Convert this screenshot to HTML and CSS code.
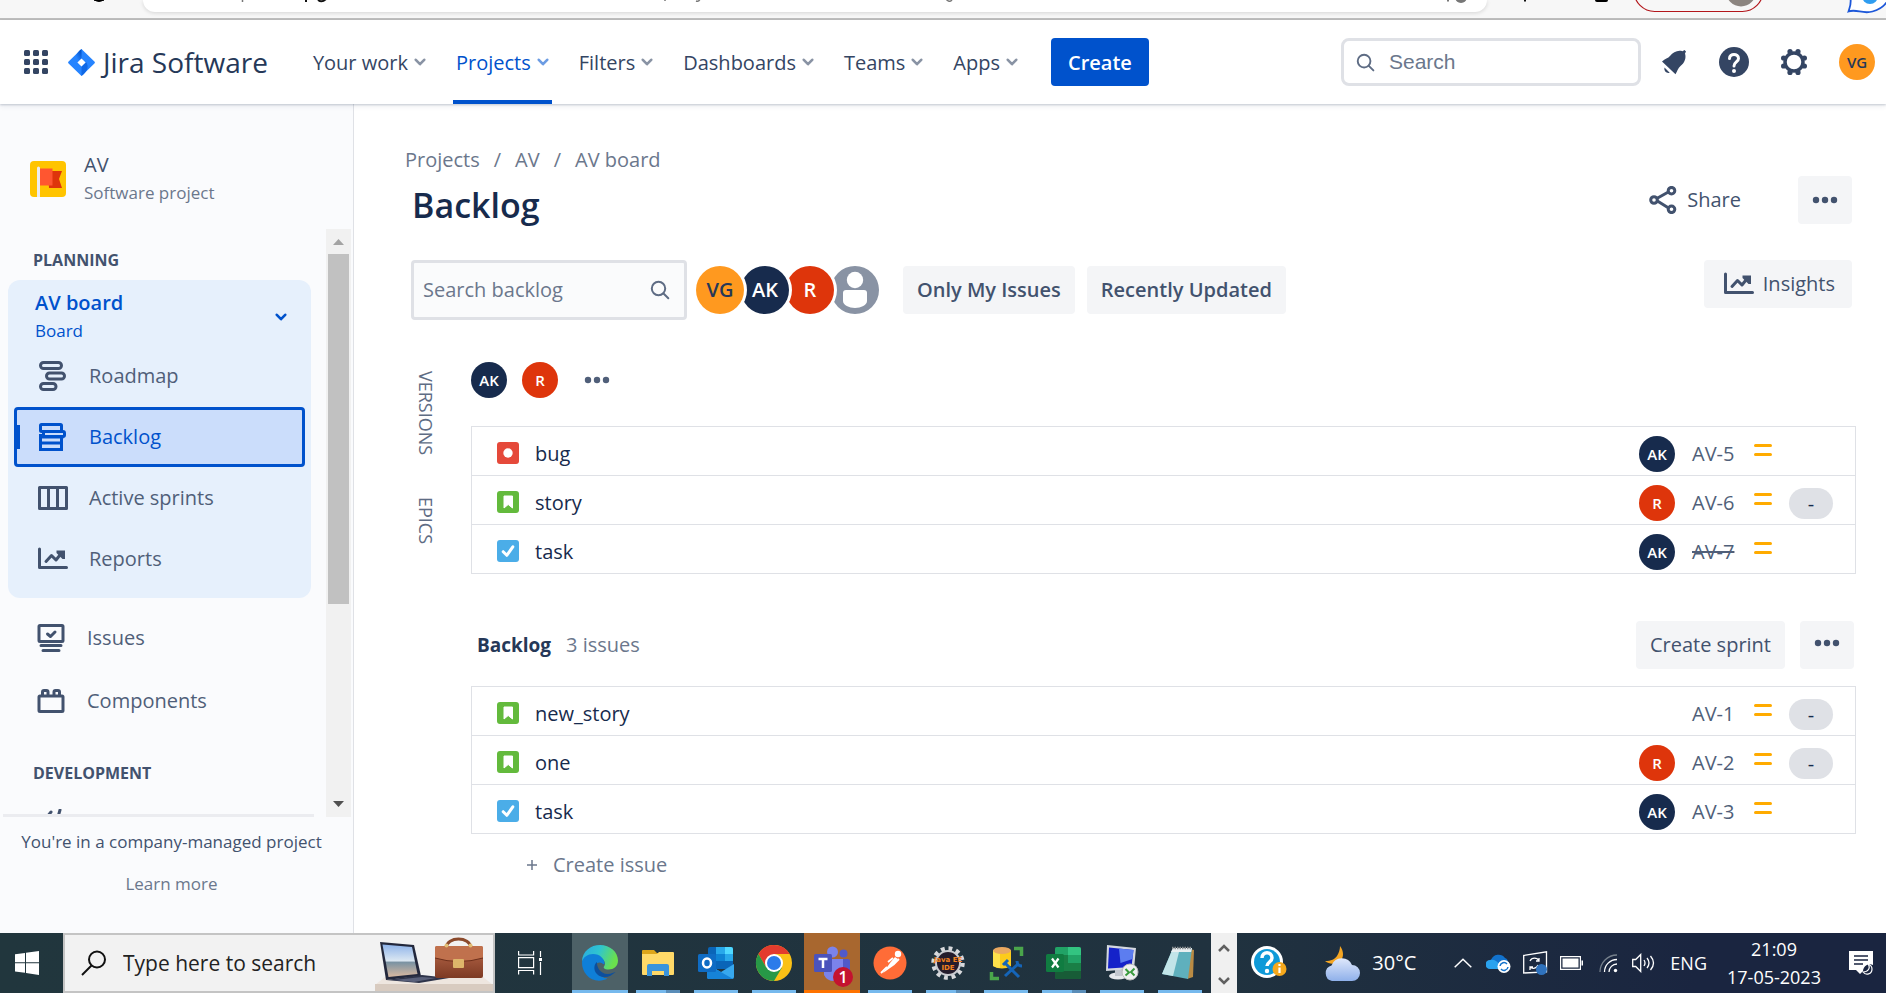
FILE: index.html
```html
<!DOCTYPE html>
<html lang="en">
<head>
<meta charset="utf-8">
<title>AV board - Backlog - Jira Software</title>
<link rel="stylesheet" href="styles.css">
</head>
<body>
<svg class="defs" aria-hidden="true">
  <symbol id="chev" viewBox="0 0 12 8"><path d="M1.8 1.8 6 6.2l4.200-4.400" fill="none" stroke="currentColor" stroke-width="2.600" stroke-linecap="round" stroke-linejoin="round"/></symbol>
  <symbol id="lens" viewBox="0 0 20 20"><circle cx="8.500" cy="8.500" r="6.700" fill="none" stroke="currentColor" stroke-width="2"/><path d="m13.500 13.500 4.800 4.800" stroke="currentColor" stroke-width="2" stroke-linecap="round"/></symbol>
  <symbol id="dots" viewBox="0 0 26 8"><g fill="currentColor"><circle cx="4" cy="4" r="3.200"/><circle cx="13" cy="4" r="3.200"/><circle cx="22" cy="4" r="3.200"/></g></symbol>
  <symbol id="chart" viewBox="0 0 30 24"><g fill="none" stroke="currentColor" stroke-width="3" stroke-linecap="round" stroke-linejoin="round"><path d="M1.500 2v18.500h27"/><path d="m8 14.500 5.500-6 4.500 4.500 6-7.500" /></g><path d="M18.500 3.500h8.500v8.500h-2.500L18.500 6z" fill="currentColor"/></symbol>
  <symbol id="bug" viewBox="0 0 22 22"><rect width="22" height="22" rx="3" fill="#e5493a"/><circle cx="11" cy="11" r="4.700" fill="#fff"/></symbol>
  <symbol id="story" viewBox="0 0 22 22"><rect width="22" height="22" rx="3" fill="#63ba3c"/><path d="M7 5h8.500v12L11.200 13.500 7 17z" fill="#fff" stroke="#fff" stroke-linejoin="round"/></symbol>
  <symbol id="task" viewBox="0 0 22 22"><rect width="22" height="22" rx="3" fill="#4bade8"/><path d="m6.200 11.700 3.600 3.600 6-8.500" fill="none" stroke="#fff" stroke-width="3" stroke-linecap="round" stroke-linejoin="round"/></symbol>
  <symbol id="medium" viewBox="0 0 18 12"><path d="M1.500 1.500h15M1.500 10.500h15" stroke="#ffab00" stroke-width="3" stroke-linecap="round"/></symbol>
</svg>

<div class="browser">
  <svg class="browser-left" width="143" height="18" viewBox="0 0 143 18" aria-hidden="true"><path d="M94 0q5 3 10 0z" fill="#000" stroke="#000"/></svg>
  <div class="address">
    <svg width="820" height="12" viewBox="0 0 820 12" aria-hidden="true"><path d="M99.500 0v2M803-1q3 4 6 1M522 0v1M553 1q3 1 4-2" fill="none" stroke="#777" stroke-width="1.500"/><path d="M163 0v2M175 0q4 3 8-1" fill="none" stroke="#111" stroke-width="2"/></svg>
    <svg class="address-end" width="40" height="12" viewBox="0 0 40 12" aria-hidden="true"><path d="M1 0v1.500" stroke="#777" stroke-width="2"/><circle cx="14" cy="-3" r="6" fill="#777"/></svg>
  </div>
  <svg width="399" height="18" viewBox="0 0 399 18" aria-hidden="true"><path d="M38 0v1.500" stroke="#111" stroke-width="2"/><path d="M108-1h13v1a2 2 0 0 1-2 2h-9a2 2 0 0 1-2-2z" fill="#000"/><rect x="147" y="-30" width="129" height="41.500" rx="20.700" fill="#f7f7f7" stroke="#b3161b" stroke-width="1.200"/><circle cx="254" cy="-8.500" r="15" fill="#8c8580"/><path d="M363-4c2 7 0 10-1.500 15.500 8-3 14 3 24 0 6-1.500 12-5 16-12" fill="#fff" stroke="#1c57d9" stroke-width="1.800"/><circle cx="383" cy="-4" r="8" fill="#2f9df0"/></svg>
</div>

<header class="topnav">
  <button class="plain" aria-label="Switch to">
    <svg width="24" height="24" viewBox="0 0 24 24" fill="#344563"><rect width="6" height="6" rx="1.500"/><rect x="9" width="6" height="6" rx="1.500"/><rect x="18" width="6" height="6" rx="1.500"/><rect y="9" width="6" height="6" rx="1.500"/><rect x="9" y="9" width="6" height="6" rx="1.500"/><rect x="18" y="9" width="6" height="6" rx="1.500"/><rect y="18" width="6" height="6" rx="1.500"/><rect x="9" y="18" width="6" height="6" rx="1.500"/><rect x="18" y="18" width="6" height="6" rx="1.500"/></svg>
  </button>
  <a class="logo" href="#">
    <svg width="27" height="27" viewBox="0 0 27 27" aria-hidden="true"><defs><linearGradient id="ja" x1="1" y1="0" x2=".4" y2=".8"><stop offset=".2" stop-color="#0052cc"/><stop offset="1" stop-color="#2684ff"/></linearGradient></defs><path d="M13.500 0 26.400 12.600a1.200 1.200 0 0 1 0 1.800L13.500 27 .6 14.400a1.200 1.200 0 0 1 0-1.800z" fill="#2684ff"/><path d="M13.500 0v9.500L9 14C6 10 7 5 13.500 0z" fill="url(#ja)"/><path d="M13.500 27v-9.500L18 13c3 4 2 9-4.500 14z" fill="#1068e6"/><path d="m13.500 9.500 4.100 4-4.100 4-4.100-4z" fill="#fff"/></svg>
    <span>Jira Software</span>
  </a>
  <nav class="menu">
    <button>Your work <svg><use href="#chev"/></svg></button>
    <button class="current">Projects <svg><use href="#chev"/></svg></button>
    <button>Filters <svg><use href="#chev"/></svg></button>
    <button>Dashboards <svg><use href="#chev"/></svg></button>
    <button>Teams <svg><use href="#chev"/></svg></button>
    <button>Apps <svg><use href="#chev"/></svg></button>
  </nav>
  <button class="create">Create</button>
  <div class="top-right">
    <label class="site-search"><svg width="19" height="19"><use href="#lens"/></svg><input type="text" placeholder="Search" aria-label="Search"></label>
    <button class="plain" aria-label="Notifications"><svg width="30" height="30" viewBox="0 0 30 30" fill="#344563"><path d="M3 14.500c3-2.700 6-3 8.200-5.700C14 5 19 2.600 23.500 4.200l2-1.200 1.500 1.500-1 2c1.500 4.500-.5 9.500-4.500 12.500-2.500 2-3.200 5-5 8.300z"/><path d="m5.500 20.500 5.200 5.200c-3 1-6-1.500-5.200-5.200z"/></svg></button>
    <button class="plain" aria-label="Help"><svg width="30" height="30" viewBox="0 0 30 30"><circle cx="15" cy="15" r="15" fill="#344563"/><path d="M10.500 11.500c0-5.500 9-5.500 9 0 0 3.500-4.500 3.500-4.500 7.500" fill="none" stroke="#fff" stroke-width="3" stroke-linecap="round"/><circle cx="15" cy="24" r="2" fill="#fff"/></svg></button>
    <button class="plain" aria-label="Settings"><svg width="30" height="30" viewBox="0 0 30 30"><circle cx="15" cy="15" r="9" fill="none" stroke="#344563" stroke-width="3.500"/><g fill="#344563"><circle cx="11" cy="4.600" r="2.600"/><circle cx="19" cy="4.600" r="2.600"/><circle cx="11" cy="25.400" r="2.600"/><circle cx="19" cy="25.400" r="2.600"/><circle cx="4.600" cy="11" r="2.600"/><circle cx="4.600" cy="19" r="2.600"/><circle cx="25.400" cy="11" r="2.600"/><circle cx="25.400" cy="19" r="2.600"/></g></svg></button>
    <button class="avatar vg" aria-label="Profile">VG</button>
  </div>
</header>

<div class="workspace">
  <aside class="sidebar">
    <div class="project">
      <svg width="36" height="36" viewBox="0 0 36 36" aria-hidden="true"><rect width="36" height="36" rx="4" fill="#ffc400"/><path d="M18 10h14l-3 8 3 9H19z" fill="#de350b"/><path d="M10 7.500h12.500v17H10z" fill="#ff5630"/><path d="M7 7q0-1.500 1.500-1.500T10 7v29H7z" fill="#ebecf0"/></svg>
      <div><strong>AV</strong><span>Software project</span></div>
    </div>
    <div class="scroller">
      <div class="scroll-view">
        <div class="scroll-body">
          <h2>Planning</h2>
          <section class="board">
            <button class="board-head"><span><strong>AV board</strong><small>Board</small></span><svg width="12" height="8"><use href="#chev"/></svg></button>
            <a href="#"><svg width="30" height="30" viewBox="0 0 30 30"><g fill="none" stroke="currentColor" stroke-width="3"><rect x="2.500" y="1.500" width="21" height="6" rx="3"/><rect x="8.500" y="12" width="18" height="6" rx="3"/><rect x="2.500" y="22.500" width="15.500" height="6" rx="3"/></g></svg>Roadmap</a>
            <a href="#" class="selected"><svg width="30" height="30" viewBox="0 0 30 30"><g fill="none" stroke="currentColor" stroke-width="3"><rect x="2.500" y="2.500" width="21" height="7" rx="1"/><rect x="5.500" y="9.500" width="21" height="5" rx="1.500"/><path d="M2.500 12v15.500h21V15M2.500 15h23M2.500 21h21"/></g></svg>Backlog</a>
            <a href="#"><svg width="30" height="30" viewBox="0 0 30 30"><path d="M1.500 4.500h27v21h-27zM10.500 4.500v21M19.500 4.500v21" fill="none" stroke="currentColor" stroke-width="3" stroke-linejoin="round"/></svg>Active sprints</a>
            <a href="#"><svg width="30" height="24"><use href="#chart"/></svg>Reports</a>
          </section>
          <div class="side-links">
            <a href="#"><svg width="28" height="30" viewBox="0 0 28 30"><g fill="none" stroke="currentColor" stroke-width="3" stroke-linecap="round" stroke-linejoin="round"><rect x="2" y="2.500" width="24" height="16" rx="1"/><path d="m10.500 11 3 2.500 4.500-4.500M4 22.500h20M6 27.500h16"/></g></svg>Issues</a>
            <a href="#"><svg width="28" height="26" viewBox="0 0 28 26"><g fill="none" stroke="currentColor" stroke-width="3" stroke-linejoin="round"><rect x="2" y="8" width="24" height="15.500" rx="1"/><path d="M5.500 8V4q0-1.500 1.500-1.500h2.500Q11 2.500 11 4v4M17 8V4q0-1.500 1.500-1.500H21q1.500 0 1.500 1.500v4"/></g></svg>Components</a>
          </div>
          <h2>Development</h2>
          <svg class="code" width="28" height="28" viewBox="0 0 28 28" aria-hidden="true"><path d="m11 3-4 5 4 5M20 1l-4 14" stroke="#42526e" stroke-width="3" fill="none" stroke-linecap="round"/></svg>
        </div>
        <div class="divider"></div>
      </div>
      <div class="scrollbar" aria-hidden="true">
        <svg width="12" height="6" viewBox="0 0 12 6"><path d="M0 6h11L5.500 0z" fill="#a3a3a3"/></svg>
        <div class="track"><div class="thumb"></div></div>
        <svg width="12" height="6" viewBox="0 0 12 6"><path d="M0 0h11L5.500 6z" fill="#505050"/></svg>
      </div>
    </div>
    <footer class="side-foot"><p>You're in a company-managed project</p><a href="#">Learn more</a></footer>
  </aside>

  <main>
    <div class="page-head">
      <div>
        <nav class="crumbs"><a href="#">Projects</a><span>/</span><a href="#">AV</a><span>/</span><a href="#">AV board</a></nav>
        <h1>Backlog</h1>
      </div>
      <div class="actions">
        <button class="share"><svg width="28" height="28" viewBox="0 0 28 28" fill="none" stroke="currentColor" stroke-width="3"><path d="M6 13.500 22 4.500M6 13.500l16 10"/><circle cx="5" cy="14" r="3.300" fill="#fff"/><circle cx="22.500" cy="4.700" r="3.300" fill="#fff"/><circle cx="22.500" cy="23.300" r="3.300" fill="#fff"/></svg>Share</button>
        <button class="grey" aria-label="More"><svg width="26" height="8"><use href="#dots"/></svg></button>
      </div>
    </div>

    <div class="toolbar">
      <label class="backlog-search"><input type="text" placeholder="Search backlog" aria-label="Search backlog"><svg width="20" height="20"><use href="#lens"/></svg></label>
      <div class="people">
        <button class="avatar big vg">VG</button><button class="avatar big ak">AK</button><button class="avatar big r">R</button><button class="avatar big none" aria-label="Unassigned"><svg width="48" height="48" viewBox="0 0 48 48" fill="#fff"><circle cx="24" cy="14" r="8.200"/><path d="M12 27a3 3 0 0 1 3-3h18a3 3 0 0 1 3 3v8c0 4-6 7-12 7s-12-3-12-7z"/></svg></button>
      </div>
      <button class="grey">Only My Issues</button>
      <button class="grey">Recently Updated</button>
      <button class="grey insights"><svg width="30" height="24"><use href="#chart"/></svg>Insights</button>
    </div>

    <div class="planner">
      <div class="rail"><button>VERSIONS</button><button>EPICS</button></div>
      <div class="lists">
        <div class="sprint-head"><span class="avatar ak">AK</span><span class="avatar r">R</span><button class="plain dots" aria-label="Sprint workload"><svg width="26" height="8"><use href="#dots"/></svg></button></div>
        <ul class="issues">
          <li><svg class="type"><use href="#bug"/></svg><a class="title" href="#">bug</a><span class="avatar ak">AK</span><a class="key" href="#">AV-5</a><svg class="prio"><use href="#medium"/></svg><span></span></li>
          <li><svg class="type"><use href="#story"/></svg><a class="title" href="#">story</a><span class="avatar r">R</span><a class="key" href="#">AV-6</a><svg class="prio"><use href="#medium"/></svg><span class="points">-</span></li>
          <li><svg class="type"><use href="#task"/></svg><a class="title" href="#">task</a><span class="avatar ak">AK</span><a class="key done" href="#">AV-7</a><svg class="prio"><use href="#medium"/></svg><span></span></li>
        </ul>
        <div class="backlog-head"><h2>Backlog</h2><span>3 issues</span><button class="grey light">Create sprint</button><button class="grey" aria-label="Backlog actions"><svg width="26" height="8"><use href="#dots"/></svg></button></div>
        <ul class="issues">
          <li><svg class="type"><use href="#story"/></svg><a class="title" href="#">new_story</a><span></span><a class="key" href="#">AV-1</a><svg class="prio"><use href="#medium"/></svg><span class="points">-</span></li>
          <li><svg class="type"><use href="#story"/></svg><a class="title" href="#">one</a><span class="avatar r">R</span><a class="key" href="#">AV-2</a><svg class="prio"><use href="#medium"/></svg><span class="points">-</span></li>
          <li><svg class="type"><use href="#task"/></svg><a class="title" href="#">task</a><span class="avatar ak">AK</span><a class="key" href="#">AV-3</a><svg class="prio"><use href="#medium"/></svg><span></span></li>
        </ul>
        <button class="create-issue"><svg width="10" height="10" viewBox="0 0 10 10"><path d="M5 0v10M0 5h10" stroke="currentColor" stroke-width="1.500"/></svg>Create issue</button>
      </div>
    </div>
  </main>
</div>

<footer class="taskbar">
  <button class="start" aria-label="Start"><svg width="24" height="24" viewBox="0 0 24 24" fill="#fff"><path d="M0 3.300 10 2v9.300H0zM11 1.800 24 0v11.300H11zM0 12.300h10v9.500L0 20.500zM11 12.300h13V24L11 22z"/></svg></button>
  <label class="win-search"><svg class="mag" width="26" height="26" viewBox="0 0 26 26" fill="none" stroke="#111" stroke-width="2"><circle cx="16" cy="9.500" r="8"/><path d="M10.500 15.500 1 25"/></svg><input type="text" placeholder="Type here to search" aria-label="Type here to search">
    <svg class="art" width="118" height="56" viewBox="0 0 118 56" aria-hidden="true"><defs><linearGradient id="sc" x1="0" y1="0" x2="0" y2="1"><stop offset="0" stop-color="#8fb4ea"/><stop offset=".5" stop-color="#dbe7f2"/><stop offset=".55" stop-color="#7b93a3"/><stop offset="1" stop-color="#d9b9a0"/></linearGradient><linearGradient id="bg" x1="0" y1="0" x2="0" y2="1"><stop offset="0" stop-color="#b9694a"/><stop offset="1" stop-color="#7d3a24"/></linearGradient></defs><path d="M10 42h98l10 8H0z" fill="#eee6df"/><path d="M0 49h118v7H0z" fill="#d8cbc0"/><path d="m5 7 34 3 7 31-35 4z" fill="#23283c"/><path d="m7.500 9.500 29.500 2.500 5.500 27-29 3z" fill="url(#sc)"/><path d="m11 45 36-5 27 3-30 5z" fill="#2d3349"/><path d="m19 45 28-3 14 1-22 4z" fill="#59607a"/><path d="M71 13C72 1 95 1 96 13" fill="none" stroke="#8b4a2c" stroke-width="3"/><rect x="60" y="11" width="48" height="32" rx="2" fill="url(#bg)"/><path d="M60 13q0-2 2-2h44q2 0 2 2v10q-24 7-48 0z" fill="#c0714d"/><path d="M60 23q24 7 48 0" fill="none" stroke="#6d2f1b"/><rect x="78" y="24" width="11" height="9" rx="1" fill="#deb56a"/><circle cx="71.500" cy="10.500" r="2" fill="#e2bd75"/><circle cx="95.500" cy="10.500" r="2" fill="#e2bd75"/></svg></label>
  <button class="taskview" aria-label="Task View"><svg width="24" height="24" viewBox="0 0 24 24" fill="none" stroke="#fff" stroke-width="1.200"><path d="M.6 0v4h15V0M.6 6.600h15v10H.6zM.6 23.500v-4h15v4M22.500 0v6M22.500 11v13"/><rect x="21" y="7" width="3" height="3" fill="#fff" stroke="none"/></svg></button>
  <div class="apps">
    <button class="active" aria-label="Microsoft Edge"><svg viewBox="0 0 36 36"><defs><linearGradient id="e1" x1="0" y1="0" x2="1" y2=".3"><stop offset="0" stop-color="#2aa9e0"/><stop offset=".5" stop-color="#2fc5d0"/><stop offset="1" stop-color="#6ae04d"/></linearGradient></defs><path d="M0 17C0 6 9 0 18 0c10 0 18 7 18 15.500 0 6-4.500 9-9.500 9-4 0-5.500-1.500-4.500-3 3-4-1-9-7-9C7 12.500 1 13 0 17z" fill="url(#e1)"/><path d="M0 17c1-5 6-8 11-8 7 0 12 5 11.500 10-1 1-4-3-7-1-4 3-2 10 3 13 4 2.500 8 3 8 2-14 8-27-3-26.500-16z" fill="#0f7fd8"/><path d="M15 17c-5 4-3 15 8 15 4 0 7-2 10.500-5-1 0-4 2-8 2-7 0-11-7-10.500-12z" fill="#0c4f9e"/></svg></button>
    <button aria-label="File Explorer" class="multi"><svg viewBox="0 0 36 36"><path d="M2 6q0-1 1-1h11l3 3h16q1 0 1 1v20H2z" fill="#dda51a"/><path d="M2 9h15l2-2h14q1 0 1 1v21q0 1-1 1H3q-1 0-1-1z" fill="#ffd968"/><path d="M7 31V21q0-2 2-2h18q2 0 2 2v10h-5v-5H12v5z" fill="#3a94dc"/></svg></button>
    <button aria-label="Outlook"><svg viewBox="0 0 36 36"><rect x="10" y="2" width="25" height="22" rx="2" fill="#0a65b8"/><path d="M18 2h9v7h-9zM27 9h8v7h-8z" fill="#28a8ea"/><path d="M27 2h6q2 0 2 2v5h-8z" fill="#50d9ff"/><path d="M18 9h9v7h-9z" fill="#0f83d4"/><path d="M9 19l14 8 13-8v13q0 2-2 2H11q-2 0-2-2z" fill="#37a8ee"/><path d="m9 19 26 15H11q-2 0-2-2z" fill="#1683d8"/><rect x="0" y="9" width="18" height="18" rx="1.500" fill="#0f6cc4"/><ellipse cx="9" cy="18" rx="4" ry="4.500" fill="none" stroke="#fff" stroke-width="2.500"/></svg></button>
    <button aria-label="Google Chrome"><svg viewBox="0 0 36 36"><circle cx="18" cy="18" r="18" fill="#fbc116"/><path d="M2.400 9A18 18 0 0 1 33.600 9H18l-8 13z" fill="#e33b2e"/><path d="M2.400 9A18 18 0 0 0 18 36l8-13.500-8 3.500-8-4z" fill="#279847"/><circle cx="18" cy="18" r="9" fill="#fff"/><circle cx="18" cy="18" r="7" fill="#2b7bea"/></svg></button>
    <button class="alert" aria-label="Microsoft Teams, 1 notification"><svg viewBox="0 0 40 40"><circle cx="20.500" cy="9" r="5.500" fill="#7b83eb"/><circle cx="31.500" cy="10.500" r="4" fill="#5059c9"/><path d="M27 16h9q2 0 2 2v10q-3 6-9 3z" fill="#5059c9"/><path d="M12 16h19v14q-1 8-9 8-7 0-10-6z" fill="#7b83eb"/><rect x="2" y="11" width="18" height="18" rx="1.500" fill="#4b53bc"/><path d="M6.500 16h9M11 16v9" stroke="#fff" stroke-width="2.500"/></svg><span class="badge">1</span></button>
    <button aria-label="Postman"><svg viewBox="0 0 36 36"><circle cx="18" cy="18" r="16.500" fill="#ff6c37"/><circle cx="26" cy="9" r="3.200" fill="#fff"/><path d="m23 12 3 2-5 7-10 7 7-10z" fill="#fff"/><path d="m16 17 5-4M21 20l6-6M9 28l6-6" stroke="#fff" stroke-width="1.800"/></svg></button>
    <button aria-label="Java EE IDE" class="multi"><svg viewBox="0 0 36 36"><circle cx="18" cy="18" r="14.500" fill="none" stroke="#d7d9dc" stroke-width="4.500" stroke-dasharray="3.800 3.800"/><circle cx="18" cy="18" r="12" fill="#241c2c" stroke="#c9cbd0" stroke-width="2"/><text x="18" y="17" class="ide">Java EE</text><text x="18" y="25" class="ide">IDE</text></svg></button>
    <button aria-label="SQL Developer"><svg viewBox="0 0 36 36"><path d="M5 5v16q9 5 18 0V5z" fill="#fccb1b"/><path d="M5 5v16q3 2 7 2V5z" fill="#ffe14b"/><ellipse cx="14" cy="5.500" rx="9" ry="3.500" fill="#e9a860"/><path d="M26 3.500h7.500V11M3.500 27v6.500H11" fill="none" stroke="#4aa54b" stroke-width="3.500"/><path d="m17 31 13-12M17 18l14 14" stroke="#1565b8" stroke-width="3"/><path d="m15 20 5-5M29 16q0 5 5 5" stroke="#1565b8" stroke-width="3" fill="none"/></svg></button>
    <button aria-label="Excel" class="multi"><svg viewBox="0 0 36 36"><rect x="9" y="2" width="26" height="32" rx="2" fill="#1a7f46"/><path d="M9 4q0-2 2-2h11v8H9z" fill="#21a366"/><path d="M22 2h11q2 0 2 2v6H22z" fill="#33c481"/><path d="M22 10h13v8H22z" fill="#21a366"/><path d="M9 26h26v6q0 2-2 2H11q-2 0-2-2z" fill="#185c37"/><rect x="0" y="9" width="18" height="18" rx="1.500" fill="#107c41"/><path d="m6 13.500 6.500 9M12.500 13.500 6 22.500" stroke="#fff" stroke-width="2.200"/></svg></button>
    <button aria-label="Remote Desktop"><svg viewBox="0 0 36 36"><path d="m3 0 29 3-2 21-28 2z" fill="#d4d8e0"/><path d="m5 2.500 24.500 2.500-2 17L4 23.500z" fill="#1522c9"/><path d="m15 3.500 14.500 1.500-1 9-12 4z" fill="#5c7df0"/><ellipse cx="14" cy="31" rx="9" ry="3.500" fill="#e6e8ec"/><path d="M11 25h7v6h-7z" fill="#c3c7cf"/><circle cx="26" cy="27" r="8" fill="#eef0f0" stroke="#bbb"/><path d="m21.500 24 3.500 3.500-3.500 3M30.500 23.500 27 27l3.500 3.500" fill="none" stroke="#3a9a3d" stroke-width="2"/></svg></button>
    <button aria-label="Notepad"><svg viewBox="0 0 36 36"><path d="m28 4 4 1-1 27-6 2z" fill="#b98b44"/><path d="M11 3h19l-4 31-26-5z" fill="#5fb0bd"/><path d="M11 3h7l-7 28-11-2z" fill="#c2e4e8"/><path d="M11 3h19l-.8 4H9z" fill="#e8eef0"/><path d="M10 3h20" stroke="#8a8f92" stroke-width="2.500" stroke-dasharray="1.500 1"/></svg></button>
  </div>
  <div class="stepper"><button aria-label="Up"><svg width="12" height="8" viewBox="0 0 12 8"><path d="m1 7 5-5 5 5" fill="none" stroke="#606060" stroke-width="2.500"/></svg></button><button aria-label="Down"><svg width="12" height="8" viewBox="0 0 12 8"><path d="m1 1 5 5 5-5" fill="none" stroke="#606060" stroke-width="2.500"/></svg></button></div>
  <div class="tray">
    <svg class="help" width="36" height="34" viewBox="0 0 36 34" aria-hidden="true"><circle cx="16" cy="16" r="16" fill="#fff"/><circle cx="16" cy="16" r="13" fill="#0f9ad8"/><path d="M11 12c0-7 10-7 10 0 0 4-5 4-5 8" fill="none" stroke="#fff" stroke-width="3.500"/><circle cx="16" cy="25" r="2.200" fill="#fff"/><circle cx="28.500" cy="23" r="7" fill="#f5a81c"/><path d="M28.500 21.500v5.500M28.500 18v2" stroke="#fff" stroke-width="2.200"/></svg>
    <svg class="weather" width="36" height="36" viewBox="0 0 36 36" aria-hidden="true"><defs><linearGradient id="cl" x1="0" y1="0" x2="0" y2="1"><stop offset="0" stop-color="#dfe8fb"/><stop offset="1" stop-color="#8fb0ea"/></linearGradient></defs><path d="M16 1c4 5 4 12 0 15S6 20 1 16c6 0 10-2 12-5s3-7 3-10z" fill="#f5a623"/><path d="M8 36a8 8 0 0 1-.5-15.500A11 11 0 0 1 28 20a8 8 0 0 1 0 16z" fill="url(#cl)"/></svg>
    <span class="temp">30°C</span>
    <svg class="up" width="18" height="10" viewBox="0 0 18 10" aria-hidden="true"><path d="m.7 9.300 8.300-8 8.300 8" fill="none" stroke="#fff" stroke-width="1.500"/></svg>
    <svg class="cloud" width="25" height="20" viewBox="0 0 25 20" aria-hidden="true"><path d="M5 16a6 6 0 0 1 0-9A8 8 0 0 1 19 5c3 1 4 4 3 8z" fill="#1272cc"/><path d="M4 16a4.500 4.500 0 0 1 0-9c4-1 7 1 9 4v5z" fill="#2aa2ee"/><circle cx="18" cy="13.500" r="6.500" fill="#fff"/><path d="M14 13a4 4 0 0 1 7-2M22 14a4 4 0 0 1-7 2" fill="none" stroke="#1272cc" stroke-width="1.500"/></svg>
    <svg class="sync" width="25" height="24" viewBox="0 0 25 24" aria-hidden="true"><path d="M.7 4.500 23.500.8v20L.7 22z" fill="none" stroke="#fff" stroke-width="1.300"/><path d="M7 10a5 5 0 0 1 9 0m0-3v3h-3M15 14a5 5 0 0 1-8 2m0 3v-3h3" fill="none" stroke="#fff" stroke-width="1.300"/><circle cx="18.500" cy="18.500" r="5.500" fill="#2f72bd"/></svg>
    <svg class="battery" width="23" height="14" viewBox="0 0 23 14" aria-hidden="true"><path d="M.6.600h19.800v12.800H.6z" fill="none" stroke="#fff" stroke-width="1.200"/><path d="M2.500 2.500h16v9h-16zM21.500 4.500H23v5h-1.500z" fill="#fff"/></svg>
    <svg class="wifi" width="19" height="19" viewBox="0 0 19 19" fill="none" aria-hidden="true"><path d="M1 18A17 17 0 0 1 18 1" stroke="#76808c" stroke-width="1.300"/><path d="M5.500 18A12.500 12.500 0 0 1 18 5.500M10 18a8 8 0 0 1 8-8" stroke="#fff" stroke-width="1.300"/><circle cx="16.500" cy="16.500" r="1.700" fill="#fff"/></svg>
    <svg class="sound" width="23" height="20" viewBox="0 0 23 20" fill="none" stroke="#fff" stroke-width="1.300" aria-hidden="true"><path d="M.7 6.500h3l5-5v17l-5-5h-3zM12 7q2 3 0 6M15 5q4 5 0 10M18.500 3q6 7 0 14"/></svg>
    <span class="lang">ENG</span>
    <time class="clock"><span>21:09</span><span>17-05-2023</span></time>
    <svg class="notify" width="24" height="24" viewBox="0 0 24 24" aria-hidden="true"><path d="M0 0h24v14a7 7 0 0 0-10 6l-3 3-4-4H0z" fill="#fff"/><path d="M5 5h14M5 9h14M5 13h9" stroke="#1a2540" stroke-width="1.300"/><path d="M19 13c3 4 0 8-5 8 3 4 9 2 9-3 0-2-1-4-4-5z" fill="#1a2540" stroke="#fff" stroke-width="1.200"/></svg>
  </div>
</footer>
</body>
</html>
```

FILE: styles.css
```css
* { box-sizing: border-box; }
html, body { margin: 0; height: 100%; }
body {
  display: grid;
  grid-template-rows: auto auto 1fr auto;
  grid-template-columns: minmax(0, 1fr);
  overflow: hidden;
  background: #fff;
  color: #172b4d;
  font: 20px/28px "Open Sans", "Noto Sans", sans-serif;
}
button, input { font: inherit; color: inherit; }
button { border: 0; padding: 0; background: none; white-space: nowrap; }
input { border: 0; outline: 0; padding: 0; background: none; min-width: 0; flex: 1; }
a { color: inherit; text-decoration: none; }
svg { flex: none; display: block; }
h1, h2, p, ul { margin: 0; padding: 0; list-style: none; }
.defs { position: absolute; width: 0; height: 0; }

/* browser edge */
.browser { display: flex; height: 20px; background: #f7f7f7; border-bottom: 2px solid #bdbdbd; overflow: hidden; }
.address { flex: 1; display: flex; justify-content: space-between; height: 12px; background: #fff; border-radius: 0 0 20px 20px; box-shadow: 0 1px 4px rgba(0, 0, 0, .14); }

/* header */
.topnav {
  display: flex; align-items: center; height: 84px; padding: 0 11px 0 24px;
  background: #fff; position: relative; color: #344563; font-weight: 500;
  box-shadow: 0 1px 2px rgba(9, 30, 66, .2), 0 3px 5px rgba(9, 30, 66, .06);
}
.plain { display: grid; place-items: center; }
.logo { display: flex; align-items: center; gap: 8px; margin-left: 20px; font-size: 28px; color: #253858; white-space: nowrap; }
.menu { display: flex; gap: 24px; margin-left: 42px; align-self: stretch; }
.menu button { display: flex; align-items: center; gap: 6px; padding: 6px 3px 0; border-bottom: 4px solid transparent; }
.menu svg { width: 12px; height: 8px; margin-bottom: 2px; color: #8993a4; }
.menu .current { color: #0052cc; border-color: #0052cc; }
.menu .current svg { color: #6c9ce3; }
.create { height: 48px; padding: 2px 17px 0; margin-left: 30px; border-radius: 4px; background: #0052cc; color: #fff; font-weight: 600; }
.top-right { display: flex; align-items: center; margin-left: auto; gap: 30px; }
.site-search { display: flex; align-items: center; gap: 14px; width: 300px; height: 48px; padding: 0 12px; margin-right: -12px; border: 3px solid #dfe1e6; border-radius: 8px; color: #5e6c84; font: 21px "Liberation Sans", Arial, sans-serif; }
::placeholder { color: #6b778c; opacity: 1; }
.avatar { display: grid; place-items: center; width: 36px; height: 36px; border-radius: 50%; color: #fff; font-size: 15px; font-weight: 600; line-height: 1; }
.vg { background: #ff991f; color: #253858; }
.ak { background: #172b4d; }
.r { background: #de350b; }
.none { background: #8993a4; }

/* sidebar */
.workspace { display: grid; grid-template-columns: 354px minmax(0, 1fr); min-height: 0; }
.sidebar { display: grid; grid-template-rows: auto minmax(0, 1fr) auto; min-height: 0; padding-top: 47px; background: #fafbfd; border-right: 1px solid #dfe1e6; color: #42526e; }
.project { display: flex; align-items: center; gap: 18px; padding-left: 30px; margin-bottom: 22px; }
.project strong, .project span { display: block; }
.project strong { font-weight: 500; }
.project span { font-size: 17px; color: #6b778c; }
.scroller { display: flex; min-height: 0; }
.scroll-view { flex: 1; display: flex; flex-direction: column; min-width: 0; }
.scroll-body { flex: 1; min-height: 0; overflow: hidden; padding: 20px 15px 0 8px; }
.scroll-body h2 { padding-left: 25px; font-size: 16px; font-weight: 700; line-height: 22px; text-transform: uppercase; }
.board { margin: 9px 0; padding: 9px 6px; border-radius: 12px; background: #e6f0fc; display: grid; gap: 1px; }
.board-head { display: flex; justify-content: space-between; align-items: center; padding: 0 18px 0 21px; color: #0052cc; text-align: left; }
.board-head strong, .board-head small { display: block; }
.board-head strong { font-weight: 600; }
.board-head small { font-size: 17px; }
.board a { display: flex; align-items: center; height: 60px; padding-left: 24px; gap: 21px; border-radius: 4px; color: #505f79; }
.board a svg, .side-links svg { color: #42526e; }
.board a.selected { padding-left: 21px; border: 3px solid #0052cc; color: #0052cc; background: linear-gradient(#0052cc, #0052cc) 0 50% / 3px 24px no-repeat #cbddfb; }
.board a.selected svg { color: #0052cc; }
.side-links { display: grid; gap: 1px; margin-bottom: 30px; }
.side-links a { display: flex; align-items: center; gap: 22px; height: 62px; padding-left: 29px; color: #505f79; }
.code { margin: 25px 0 0 32px; }
.divider { height: 3px; margin: 0 12px 0 3px; background: #ebecf0; }
.scrollbar { display: flex; flex-direction: column; align-items: center; gap: 9px; width: 25px; margin-right: 2px; padding: 10px 0; background: #f1f1f1; }
.track { flex: 1; width: 21px; }
.thumb { height: 65%; background: #c1c1c1; }
.side-foot { padding: 4px 10px 28px 0; text-align: center; font-size: 17px; line-height: 42px; white-space: nowrap; }
.side-foot a { display: block; color: #6b778c; font-weight: 500; }

/* page */
main { padding: 42px 30px 0 51px; }
.page-head { display: flex; justify-content: space-between; padding-right: 4px; }
.crumbs { display: flex; gap: 14px; color: #6b778c; }
h1 { margin-top: 7px; padding-left: 7px; font-size: 34px; line-height: 48px; font-weight: 600; }
.actions { display: flex; gap: 57px; margin-top: 30px; height: 48px; }
.share { display: flex; align-items: center; gap: 10px; color: #42526e; font-weight: 500; }
.grey { height: 48px; padding: 0 14px; border-radius: 4px; background: #f4f5f7; color: #42526e; font-weight: 600; }
.light { font-weight: 400; }
.toolbar { display: flex; align-items: center; margin-top: 31px; padding: 0 4px 0 6px; gap: 12px; }
.backlog-search { display: flex; align-items: center; width: 276px; height: 60px; padding: 0 14px 0 9px; border: 3px solid #dfe1e6; border-radius: 4px; background: #fafbfc; color: #5e6c84; }
.people { display: flex; margin: 0 12px 0 -3px; }
.big { width: 48px; height: 48px; font-size: 20px; margin-right: -3px; position: relative; box-shadow: 0 0 0 3px #fff; }
.big:nth-child(1) { z-index: 4; }
.big:nth-child(2) { z-index: 3; }
.big:nth-child(3) { z-index: 2; }
.big:nth-child(4) { margin-right: 0; z-index: 1; }
.insights { display: flex; align-items: center; gap: 9px; padding: 0 17px 0 20px; margin-left: auto; align-self: flex-start; font-weight: 500; }
.planner { display: grid; grid-template-columns: 66px minmax(0, 1fr); margin-top: 42px; }
.rail { display: flex; flex-direction: column; align-items: flex-start; gap: 42px; padding: 9px 0 0 11px; }
.rail button { writing-mode: vertical-rl; font-size: 18px; line-height: 20px; color: #5e6c84; }
.sprint-head { display: flex; gap: 15px; }
.dots { margin-left: 11px; color: #505f79; }
.issues { margin-top: 28px; border: 1px solid #dfe1e6; border-top: 0; }
.issues li { display: grid; grid-template-columns: 22px 1fr 36px 45px 18px 44px; column-gap: 17px; align-items: center; height: 49px; padding: 6px 22px 0 25px; border-top: 1px solid #dfe1e6; }
.type { width: 22px; height: 22px; margin-bottom: 2px; }
.title { margin-left: -1px; }
.key { color: #505f79; white-space: nowrap; }
.done { text-decoration: line-through; }
.prio { width: 18px; height: 12px; margin-bottom: 9px; }
.points { height: 31px; border-radius: 16px; background: #dfe1e6; text-align: center; line-height: 32px; }
.backlog-head { display: flex; align-items: center; gap: 15px; margin-top: 47px; padding: 0 2px 0 6px; }
.backlog-head h2 { font-size: 19px; line-height: 28px; font-weight: 700; color: #253858; }
.backlog-head span { flex: 1; color: #6b778c; }
.backlog-head .grey svg { margin-bottom: 4px; }
.backlog-head + .issues { margin-top: 17px; }
.create-issue { display: flex; align-items: center; gap: 16px; margin: 13px 0 0 56px; height: 36px; color: #6b778c; }

/* Windows taskbar */
.taskbar { display: flex; height: 60px; background: linear-gradient(90deg, #21363d, #20323f 65%, #1a2540 90%); color: #fff; }
.start { display: grid; place-items: center; width: 63px; padding-right: 9px; }
.win-search { display: flex; align-items: center; width: 432px; padding-left: 16px; border: 2px solid #c4c4c4; background: #f2f2f2; font-size: 21px; }
.win-search ::placeholder { color: #222; }
.mag { margin-right: 16px; }
.taskview { display: grid; place-items: center; width: 70px; margin-right: 7px; }
.apps { display: flex; gap: 2px; }
.apps button { position: relative; display: grid; place-items: center; width: 56px; background: linear-gradient(#76b9ed, #76b9ed) 50% 100% / 44px 3px no-repeat; }
.apps button.multi { background-image: linear-gradient(90deg, #76b9ed 30px, #5a8db8 30px); }
.apps button.active { background: linear-gradient(#76b9ed, #76b9ed) 50% 100% / 100% 3px no-repeat #4d6167; }
.apps button.alert { background: linear-gradient(#ff7300, #ff7300) 50% 100% / 100% 3px no-repeat #a8672f; }
.apps svg { width: 36px; height: 36px; overflow: visible; }
.apps .alert svg { width: 40px; height: 40px; }
.badge { position: absolute; right: 7px; bottom: 6px; display: grid; place-items: center; width: 20px; height: 20px; border-radius: 50%; background: #c4122f; font-size: 16px; font-weight: 600; line-height: 1; }
.ide { font: bold 7px "DejaVu Sans", sans-serif; fill: #f5821f; text-anchor: middle; }
.stepper { display: flex; flex-direction: column; justify-content: space-between; align-items: center; width: 26px; margin-left: 3px; padding: 11px 0 8px; background: #f0f0f0; }
.tray { flex: 1; display: flex; align-items: center; padding: 0 13px 0 14px; white-space: nowrap; }
.weather { margin-left: auto; }
.temp { margin-left: 12px; }
.up { margin-left: 38px; }
.cloud { margin-left: 14px; }
.sync { margin-left: 12px; }
.battery { margin-left: 12px; }
.wifi { margin-left: 16px; }
.sound { margin-left: 14px; }
.lang { margin-left: 15px; font-size: 18px; }
.clock { display: flex; flex-direction: column; align-items: center; width: 94px; margin: 0 28px 0 20px; font-size: 18px; }
```
